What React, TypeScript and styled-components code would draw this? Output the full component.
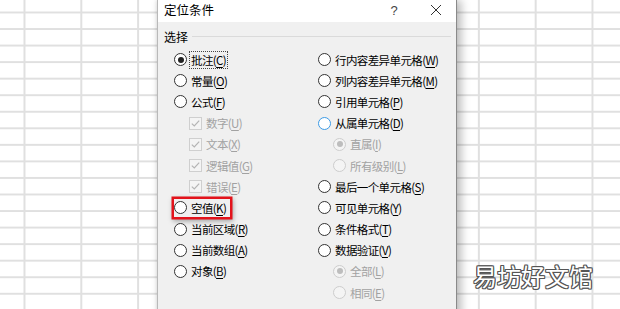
import React from 'react';
import styled, { createGlobalStyle, css } from 'styled-components';

const GlobalStyle = createGlobalStyle`
  html, body {
    margin: 0;
    padding: 0;
    background: #fff;
  }
  body {
    font-family: 'Noto Sans CJK SC', 'Noto Sans', sans-serif;
  }
`;

type Opt = {
  kind: 'radio' | 'check';
  label: string;
  key: string;
  indent?: boolean;
  checked?: boolean;
  disabled?: boolean;
  hover?: boolean;
  focus?: boolean;
  highlight?: boolean;
};

const LEFT: Opt[] = [
  { kind: 'radio', label: '批注', key: 'C', checked: true, focus: true },
  { kind: 'radio', label: '常量', key: 'O' },
  { kind: 'radio', label: '公式', key: 'F' },
  { kind: 'check', label: '数字', key: 'U', indent: true, checked: true, disabled: true },
  { kind: 'check', label: '文本', key: 'X', indent: true, checked: true, disabled: true },
  { kind: 'check', label: '逻辑值', key: 'G', indent: true, checked: true, disabled: true },
  { kind: 'check', label: '错误', key: 'E', indent: true, checked: true, disabled: true },
  { kind: 'radio', label: '空值', key: 'K', highlight: true },
  { kind: 'radio', label: '当前区域', key: 'R' },
  { kind: 'radio', label: '当前数组', key: 'A' },
  { kind: 'radio', label: '对象', key: 'B' },
];

const RIGHT: Opt[] = [
  { kind: 'radio', label: '行内容差异单元格', key: 'W' },
  { kind: 'radio', label: '列内容差异单元格', key: 'M' },
  { kind: 'radio', label: '引用单元格', key: 'P' },
  { kind: 'radio', label: '从属单元格', key: 'D', hover: true },
  { kind: 'radio', label: '直属', key: 'I', indent: true, checked: true, disabled: true },
  { kind: 'radio', label: '所有级别', key: 'L', indent: true, disabled: true },
  { kind: 'radio', label: '最后一个单元格', key: 'S' },
  { kind: 'radio', label: '可见单元格', key: 'Y' },
  { kind: 'radio', label: '条件格式', key: 'T' },
  { kind: 'radio', label: '数据验证', key: 'V' },
  { kind: 'radio', label: '全部', key: 'L', indent: true, checked: true, disabled: true },
  { kind: 'radio', label: '相同', key: 'E', indent: true, disabled: true },
];

const OptionRow = ({ opt }: { opt: Opt }) => (
  <Row $indent={!!opt.indent}>
    <Option $highlight={!!opt.highlight}>
      {opt.kind === 'radio' ? (
        <Radio $disabled={!!opt.disabled} $hover={!!opt.hover}>
          {opt.checked && <Dot $disabled={!!opt.disabled} />}
        </Radio>
      ) : (
        <Check>
          <svg width="11" height="11" viewBox="0 0 11 11">
            <path d="M1.8 5.6 L4.3 8 L9.2 2.6" fill="none" stroke="#b4b4b4" strokeWidth="1.2" />
          </svg>
        </Check>
      )}
      <Label $disabled={!!opt.disabled} $focus={!!opt.focus}>
        {opt.label}(<u>{opt.key}</u>)
      </Label>
    </Option>
  </Row>
);

export default function App() {
  return (
    <>
      <GlobalStyle />
      <Sheet>
        <Dialog>
          <TitleBar>
            <Title>定位条件</Title>
            <HelpButton>?</HelpButton>
            <CloseButton>
              <svg width="12" height="12" viewBox="0 0 12 12">
                <path d="M1 1 L11 11 M11 1 L1 11" stroke="#333" strokeWidth="1" />
              </svg>
            </CloseButton>
          </TitleBar>
          <Body>
            <GroupHeader>
              <span>选择</span>
              <GroupLine />
            </GroupHeader>
            <Columns>
              <Column>
                {LEFT.map((o, i) => (
                  <OptionRow key={i} opt={o} />
                ))}
              </Column>
              <Column>
                {RIGHT.map((o, i) => (
                  <OptionRow key={i} opt={o} />
                ))}
              </Column>
            </Columns>
          </Body>
        </Dialog>
        <Watermark>易坊好文馆</Watermark>
      </Sheet>
    </>
  );
}

const Sheet = styled.div`
  position: relative;
  width: 620px;
  height: 309px;
  overflow: hidden;
  display: flex;
  background-color: #fff;
  background-image: linear-gradient(to right, #e0e0e0 1.5px, transparent 1.5px),
    linear-gradient(to bottom, #e0e0e0 1.5px, transparent 1.5px);
  background-size: 56.8px 100%, 100% 16.55px;
  background-position: 23.5px 0, 0 11.5px;
`;

const Dialog = styled.div`
  margin-left: 157px;
  width: 300px;
  height: 330px;
  display: flex;
  flex-direction: column;
  background: #f0f0f0;
  border-left: 1px solid #b9b9b9;
  border-right: 1px solid #8a8a8a;
  box-shadow: 4px 0 9px rgba(0, 0, 0, 0.28), -1px 0 3px rgba(0, 0, 0, 0.08);
  box-sizing: border-box;
`;

const TitleBar = styled.div`
  height: 22px;
  flex: none;
  display: flex;
  align-items: center;
  padding-left: 6px;
  background: #fff;
`;

const Title = styled.span`
  flex: 1;
  font-size: 12.5px;
  color: #000;
  line-height: 1;
  margin-top: -1px;
`;

const HelpButton = styled.span`
  width: 14px;
  font-family: 'Liberation Sans', sans-serif;
  font-size: 13px;
  color: #444;
  text-align: center;
  margin-right: 29px;
  margin-top: -2px;
`;

const CloseButton = styled.span`
  display: flex;
  width: 12px;
  height: 12px;
  margin-right: 14px;
  margin-top: -2px;
`;

const Body = styled.div`
  flex: 1;
  padding: 4px 5px 0 6px;
`;

const GroupHeader = styled.div`
  display: flex;
  align-items: center;
  gap: 4px;
  height: 20px;
  font-size: 12px;
  color: #000;
`;

const GroupLine = styled.div`
  flex: 1;
  height: 1px;
  background: #dadada;
`;

const Columns = styled.div`
  display: grid;
  grid-template-columns: 144px 1fr;
  padding-left: 10px;
  margin-top: 3px;
`;

const Column = styled.div`
  display: flex;
  flex-direction: column;
`;

const Row = styled.div<{ $indent: boolean }>`
  height: 21.2px;
  display: flex;
  align-items: center;
  padding-left: ${(p) => (p.$indent ? '15px' : '0')};
`;

const Option = styled.div<{ $highlight: boolean }>`
  display: inline-flex;
  align-items: center;
  gap: 3px;
  height: 18px;
  ${(p) =>
    p.$highlight &&
    css`
      padding-right: 2px;
      box-shadow: 0 0 0 2.5px #e3131b, 1px 2px 5px 2px rgba(0, 0, 0, 0.35);
    `}
`;

const Radio = styled.span<{ $disabled: boolean; $hover: boolean }>`
  width: 13px;
  height: 13px;
  box-sizing: border-box;
  border-radius: 50%;
  display: flex;
  align-items: center;
  justify-content: center;
  background: ${(p) => (p.$disabled ? '#f4f4f4' : '#fff')};
  border: 1px solid
    ${(p) => (p.$hover ? '#3c9be6' : p.$disabled ? '#cdcdcd' : '#333')};
`;

const Dot = styled.span<{ $disabled: boolean }>`
  width: 6px;
  height: 6px;
  border-radius: 50%;
  background: ${(p) => (p.$disabled ? '#bdbdbd' : '#222')};
`;

const Check = styled.span`
  width: 13px;
  height: 13px;
  box-sizing: border-box;
  border: 1px solid #cfcfcf;
  background: #f4f4f4;
  display: flex;
  align-items: center;
  justify-content: center;
`;

const Label = styled.span<{ $disabled: boolean; $focus: boolean }>`
  font-size: 11.5px;
  letter-spacing: -0.6px;
  line-height: 16px;
  white-space: nowrap;
  color: ${(p) => (p.$disabled ? '#a2a2a2' : '#000')};
  border: 1px dotted ${(p) => (p.$focus ? '#444' : 'transparent')};
  padding: 0 1px;
  margin-left: -1px;

  u {
    text-decoration-thickness: 1px;
    text-underline-offset: 2px;
  }
`;

const Watermark = styled.div`
  position: absolute;
  left: 473px;
  top: 262px;
  font-size: 24px;
  line-height: 28px;
  letter-spacing: 0;
  color: #fff;
  text-shadow: 1px 0 0 #555, -1px 0 0 #555, 0 1px 0 #555, 0 -1px 0 #555,
    1px 1px 0 #555, -1px -1px 0 #555, 1px -1px 0 #555, -1px 1px 0 #555;
`;
